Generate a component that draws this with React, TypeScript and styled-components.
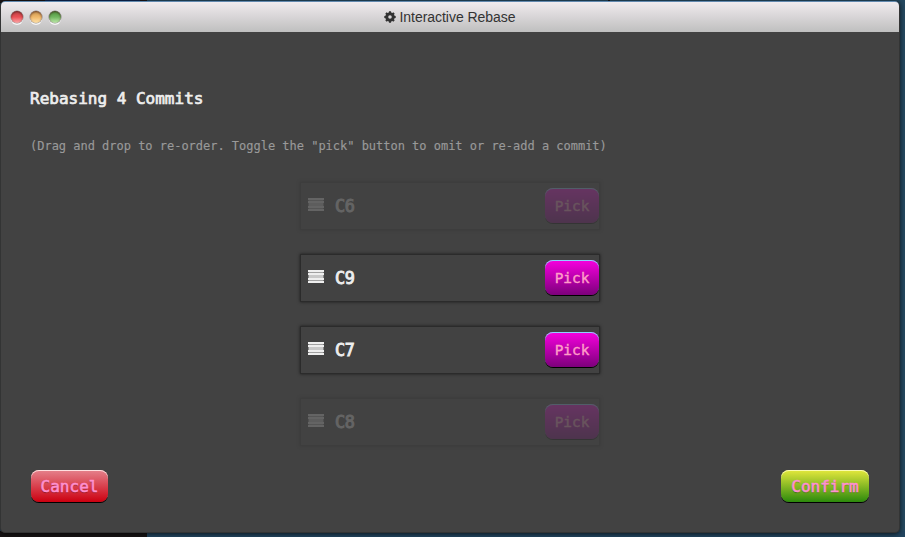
import React from "react";
import styled, { createGlobalStyle } from "styled-components";

const GlobalStyle = createGlobalStyle`
  html, body { margin: 0; padding: 0; }
  *, *::before, *::after { box-sizing: border-box; }
`;

const Desktop = styled.div`
  width: 905px;
  height: 537px;
  overflow: hidden;
  padding-top: 1px;
  background:
    linear-gradient(90deg, #171415 0 147px, #22455f 147px) 0 100% / 100% 6px no-repeat,
    linear-gradient(90deg, #1b1516 0 45px, #0c2450 45px 140px, #1b1516 140px 147px, #24485f 147px 608px, #1b1516 608px 610px, #24485f 610px) 0 0 / 100% 3px no-repeat,
    #24485f;
`;

const Window = styled.main`
  width: 900px;
  height: 532px;
  display: flex;
  flex-direction: column;
  overflow: hidden;
  border: 1px solid #333434;
  border-top: 0;
  border-radius: 5px;
  background: #424242;
  box-shadow: 0 1px 5px rgba(0, 0, 0, 0.7);
`;

const TitleBar = styled.header`
  height: 31px;
  margin: 0 -1px;
  flex: none;
  display: grid;
  grid-template-columns: 60px 1fr 60px;
  align-items: center;
  padding: 0 10px;
  border: 1px solid #6289ae;
  border-bottom: 0;
  border-radius: 5px 5px 0 0;
  background: linear-gradient(#f0ebee, #bfbfbf);
`;

const Lights = styled.div`
  display: flex;
  gap: 7px;
`;

const Light = styled.span<{ $top: string; $mid: string; $low: string }>`
  width: 12px;
  height: 12px;
  border-radius: 50%;
  background: linear-gradient(${(p) => p.$top}, ${(p) => p.$mid} 50%, ${(p) => p.$low});
  box-shadow:
    0 0 0 0.5px rgba(80, 70, 70, 0.6),
    0 2px 0 rgba(255, 255, 255, 0.8),
    inset 0 1px 2px rgba(60, 20, 20, 0.7);
`;

const WindowTitle = styled.div`
  display: flex;
  justify-content: center;
  align-items: center;
  gap: 3px;
  color: #333;
  font: 14px/20px "Liberation Sans", Arial, sans-serif;
  letter-spacing: -0.04px;
`;

const CogIcon = styled.svg`
  width: 12px;
  height: 12px;
`;

const Content = styled.section`
  flex: 1;
  display: flex;
  flex-direction: column;
  padding: 55px 30px 30px 29px;
  font-family: "DejaVu Sans Mono", monospace;
`;

const Heading = styled.h3`
  margin: 0;
  color: #eee;
  font-size: 16px;
  line-height: 24px;
  font-weight: 400;
  -webkit-text-stroke: 0.7px #eee;
`;

const Hint = styled.p`
  margin: 27px 0 0;
  color: #999;
  font-size: 12px;
  line-height: 16px;
  letter-spacing: -0.015px;
  -webkit-text-stroke: 0.15px #999;
`;

const CommitList = styled.ul`
  width: 300px;
  margin: 28px 0 0 270px;
  padding: 0;
  display: flex;
  flex-direction: column;
  gap: 24px;
  list-style: none;
`;

const CommitRow = styled.li<{ $omitted: boolean }>`
  height: 48px;
  display: flex;
  align-items: center;
  padding-left: 7px;
  border: 1px solid #2b2b2b;
  box-shadow: 0 0 3px rgba(0, 0, 0, 0.6);
  opacity: ${(p) => (p.$omitted ? 0.2 : 1)};
`;

const DragIcon = styled.svg`
  width: 16px;
  height: 13px;
  margin-bottom: 3px;
`;

const CommitName = styled.span`
  flex: 1;
  margin: 0 0 0 11px;
  color: #eee;
  font-size: 16.8px;
  line-height: 24px;
  letter-spacing: -0.3px;
  -webkit-text-stroke: 0.9px #eee;
`;

const Button = styled.button<{ $top: string; $bottom: string; $edge: string; $width: number }>`
  width: ${(p) => p.$width}px;
  height: 32px;
  padding: 1px 0 0;
  border: 0;
  border-radius: 8px;
  color: #ff90d0;
  background: linear-gradient(${(p) => p.$top}, ${(p) => p.$bottom});
  box-shadow: inset 0 1px 0 ${(p) => p.$edge}, 0 1px 0 #000;
  font: 16px/30px "DejaVu Sans Mono", monospace;
  -webkit-text-stroke: 0.6px #ff90d0;
  text-shadow: 0 1px 1px rgba(0, 0, 0, 0.35);
`;

const PickButton = styled(Button)`
  height: 35px;
  margin-bottom: 2px;
  color: #ff9cc8;
  font-size: 14.4px;
  -webkit-text-stroke: 0.4px #ff9cc8;
  text-shadow: none;
`;

const Actions = styled.footer`
  display: flex;
  justify-content: space-between;
  margin-top: 24px;
  padding-left: 1px;
`;

const commits = [
  { id: "C6", omitted: true },
  { id: "C9", omitted: false },
  { id: "C7", omitted: false },
  { id: "C8", omitted: true },
];

const toothAngles = [0, 45, 90, 135];

export default function App() {
  return (
    <Desktop>
      <GlobalStyle />
      <Window>
        <TitleBar>
          <Lights>
            <Light $top="#bd4246" $mid="#e94f55" $low="#ffabab" />
            <Light $top="#c99650" $mid="#efb76a" $low="#ffe5ad" />
            <Light $top="#4f963e" $mid="#70b55f" $low="#c1ecae" />
          </Lights>
          <WindowTitle>
            <CogIcon viewBox="0 0 12 12">
              <circle cx="6" cy="6" r="3.2" fill="none" stroke="#333" strokeWidth="2.8" />
              {toothAngles.map((angle) => (
                <path key={angle} d="M5 .3h2l.4 2H4.6zM5 11.7h2l.4-2H4.6z" fill="#333" transform={`rotate(${angle} 6 6)`} />
              ))}
            </CogIcon>
            <span>Interactive Rebase</span>
          </WindowTitle>
        </TitleBar>
        <Content>
          <Heading>Rebasing 4 Commits</Heading>
          <Hint>(Drag and drop to re-order. Toggle the "pick" button to omit or re-add a commit)</Hint>
          <CommitList>
            {commits.map((c) => (
              <CommitRow key={c.id} $omitted={c.omitted}>
                <DragIcon viewBox="0 0 16 13">
                  <path d="M.5 2.5h15M.5 10.5h15" stroke="#a0a0a0" />
                  <path d="M.5 6.5h15" stroke="#c8c8c8" strokeWidth="3" />
                  <path d="M0 1h16M0 4h16M0 9h16M0 12h16" stroke="#eee" strokeWidth="2" />
                </DragIcon>
                <CommitName>{c.id}</CommitName>
                <PickButton $width={54} $top="#f700df" $bottom="#7d007b" $edge="#8fd0ff">Pick</PickButton>
              </CommitRow>
            ))}
          </CommitList>
          <Actions>
            <Button $width={77} $top="#e5828c" $bottom="#cc0010" $edge="#ffe0e0">Cancel</Button>
            <Button $width={88} $top="#e4e83c" $bottom="#2c8a0c" $edge="#fbfbb0">Confirm</Button>
          </Actions>
        </Content>
      </Window>
    </Desktop>
  );
}
